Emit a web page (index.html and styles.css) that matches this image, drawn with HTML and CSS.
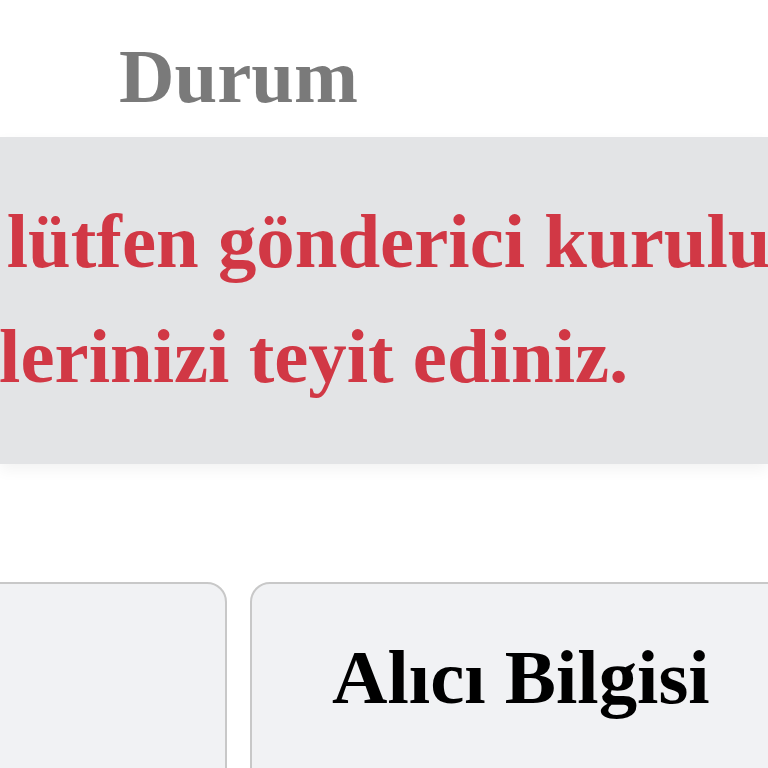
FILE: index.html
```html
<!DOCTYPE html>
<html lang="tr">
<head>
<meta charset="utf-8">
<title>Durum</title>
<link rel="stylesheet" href="styles.css">
</head>
<body>
<div class="page">
  <header class="status-head">
    <h1 class="status-title">Durum</h1>
  </header>
  <section class="alert">
    <p class="alert-text">ise, lütfen gönderici kuruluş<br>bilgilerinizi teyit ediniz.</p>
  </section>
  <section class="cards">
    <div class="card card-sender"></div>
    <div class="card card-receiver">
      <h2 class="card-title">Alıcı Bilgisi</h2>
    </div>
  </section>
</div>
</body>
</html>
```
FILE: styles.css
```css
html, body {
  margin: 0;
  padding: 0;
  background: #ffffff;
  overflow: hidden;
}

.page {
  width: 768px;
  height: 768px;
  overflow: hidden;
  font-family: "Liberation Serif", "Times New Roman", serif;
  font-weight: bold;
  font-size: 76.8px;
}

.status-head {
  padding: 31px 0 0 119px;
  height: 137px;
  box-sizing: border-box;
}

.status-title {
  margin: 0;
  font-size: 76.8px;
  line-height: 1.2;
  color: #7a7a7a;
  font-weight: bold;
}

.alert {
  background: #e3e4e6;
  padding: 47px 0 50px 0;
  box-shadow: 0 6px 14px rgba(0, 0, 0, 0.05);
  position: relative;
}

.alert-text {
  margin: 0 0 0 -146px;
  text-indent: 29px;
  white-space: nowrap;
  color: #d13845;
  line-height: 1.5;
  font-size: 76.8px;
}

.cards {
  display: grid;
  grid-template-columns: 560px 560px;
  gap: 23px;
  margin: 118px 0 0 -333px;
}

.card {
  background: #f1f2f4;
  border: 2px solid #c8c8c8;
  border-radius: 20px;
  height: 400px;
}

.card-receiver {
  padding: 48px 0 0 80px;
  box-sizing: border-box;
}

.card-title {
  margin: 0;
  font-size: 76.8px;
  line-height: 1.2;
  color: #000000;
  font-weight: bold;
  white-space: nowrap;
}
```
